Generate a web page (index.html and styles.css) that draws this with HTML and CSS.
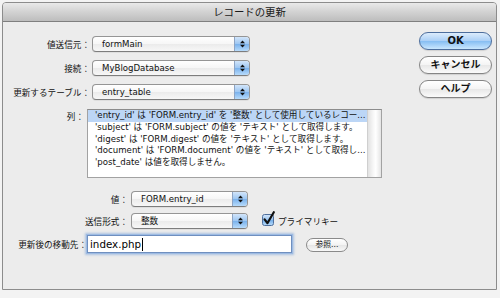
FILE: index.html
```html
<!DOCTYPE html>
<html lang="ja">
<head>
<meta charset="utf-8">
<title>レコードの更新</title>
<link rel="stylesheet" href="styles.css">
</head>
<body>
<div class="window">
  <div class="titlebar">レコードの更新</div>
  <div class="content">
    <div class="form">
      <div class="row">
        <span class="label lw-main">値送信元：</span>
        <div class="popup pw-main"><span class="popup-text">formMain</span><span class="popup-cap"><svg class="arrows" width="5" height="8" viewBox="0 0 5 8"><polygon points="0,3.2 2.5,0.5 5,3.2"/><polygon points="0,4.8 2.5,7.5 5,4.8"/></svg></span></div>
      </div>
      <div class="row gap-main">
        <span class="label lw-main">接続：</span>
        <div class="popup pw-main"><span class="popup-text">MyBlogDatabase</span><span class="popup-cap"><svg class="arrows" width="5" height="8" viewBox="0 0 5 8"><polygon points="0,3.2 2.5,0.5 5,3.2"/><polygon points="0,4.8 2.5,7.5 5,4.8"/></svg></span></div>
      </div>
      <div class="row gap-main">
        <span class="label lw-main">更新するテーブル：</span>
        <div class="popup pw-main"><span class="popup-text">entry_table</span><span class="popup-cap"><svg class="arrows" width="5" height="8" viewBox="0 0 5 8"><polygon points="0,3.2 2.5,0.5 5,3.2"/><polygon points="0,4.8 2.5,7.5 5,4.8"/></svg></span></div>
      </div>
      <div class="row row-list">
        <span class="label lw-list">列：</span>
        <div class="listbox">
          <ul class="list-items">
            <li class="selected">'entry_id' は 'FORM.entry_id' を '整数' として使用しているレコー...</li>
            <li>'subject' は 'FORM.subject' の値を 'テキスト' として取得します。</li>
            <li>'digest' は 'FORM.digest' の値を 'テキスト' として取得します。</li>
            <li>'document' は 'FORM.document' の値を 'テキスト' として取得し...</li>
            <li>'post_date' は値を取得しません。</li>
          </ul>
          <div class="scrolltrack"></div>
        </div>
      </div>
      <div class="row row-value">
        <span class="label lw-sub">値：</span>
        <div class="popup pw-sub"><span class="popup-text">FORM.entry_id</span><span class="popup-cap"><svg class="arrows" width="5" height="8" viewBox="0 0 5 8"><polygon points="0,3.2 2.5,0.5 5,3.2"/><polygon points="0,4.8 2.5,7.5 5,4.8"/></svg></span></div>
      </div>
      <div class="row gap-sub">
        <span class="label lw-sub">送信形式：</span>
        <div class="popup pw-sub"><span class="popup-text">整数</span><span class="popup-cap"><svg class="arrows" width="5" height="8" viewBox="0 0 5 8"><polygon points="0,3.2 2.5,0.5 5,3.2"/><polygon points="0,4.8 2.5,7.5 5,4.8"/></svg></span></div>
        <span class="checkbox"><svg width="16" height="16" viewBox="0 0 16 16"><defs><linearGradient id="cbg" x1="0" y1="0" x2="0" y2="1"><stop offset="0" stop-color="#d6e8fb"/><stop offset="0.5" stop-color="#98c3f0"/><stop offset="0.51" stop-color="#74aee9"/><stop offset="1" stop-color="#b9dcfb"/></linearGradient></defs><rect x="0.5" y="3.5" width="11" height="11" rx="2" fill="url(#cbg)" stroke="#4f6f9c"/><path d="M2.6 8.4 L5.4 12.2 L11.8 1.2" fill="none" stroke="#111" stroke-width="2.2" stroke-linecap="round" stroke-linejoin="round"/></svg></span>
        <span class="check-label">プライマリキー</span>
      </div>
      <div class="row gap-field">
        <span class="label lw-field">更新後の移動先：</span>
        <div class="textfield"><span class="field-text">index.php</span><span class="caret"></span></div>
        <button class="small-button">参照...</button>
      </div>
    </div>
    <div class="buttons">
      <button class="push default">OK</button>
      <button class="push">キャンセル</button>
      <button class="push">ヘルプ</button>
    </div>
  </div>
</div>
</body>
</html>
```

FILE: styles.css
```css
html, body {
  margin: 0;
  padding: 0;
}

body {
  background: #f3f3f3;
  padding: 2px 0 0 2px;
  font-family: "DejaVu Sans", "Noto Sans CJK JP", sans-serif;
  font-size: 8.6px;
  color: #111;
}

.window {
  box-sizing: border-box;
  width: 495px;
  height: 288px;
  border: 1px solid #8c8c8c;
  border-radius: 4px 4px 0 0;
  background: #ececec;
  display: flex;
  flex-direction: column;
  overflow: hidden;
}

.titlebar {
  height: 18px;
  flex: none;
  border-bottom: 1px solid #7f7f7f;
  background: linear-gradient(#e9e9e9, #d2d2d2 50%, #bdbdbd);
  text-align: center;
  font-size: 10.4px;
  line-height: 19px;
  color: #1a1a1a;
}

.content {
  flex: 1;
  display: flex;
}

.form {
  flex: 1;
  display: flex;
  flex-direction: column;
  padding-top: 14px;
}

.row {
  display: flex;
  align-items: center;
}

.gap-main { margin-top: 8px; }
.row-list { margin-top: 9px; align-items: flex-start; }
.row-value { margin-top: 13px; }
.gap-sub { margin-top: 6px; }
.gap-field { margin-top: 6px; }

.label {
  flex: none;
  text-align: right;
  white-space: nowrap;
}

.lw-main { width: 87px; margin-right: 2px; }
.lw-list { width: 81px; margin-right: 3px; padding-top: 1px; }
.lw-sub { width: 125px; margin-right: 3px; }
.lw-field { width: 84px; margin-right: 0; }

/* popup button */
.popup {
  box-sizing: border-box;
  height: 16px;
  display: flex;
  border: 1px solid #959595;
  border-bottom-color: #7d7d7d;
  border-radius: 4px;
  background: linear-gradient(#ffffff, #f6f6f6 50%, #ebebeb 51%, #f7f7f7);
  overflow: hidden;
  box-shadow: 0 1px 0 rgba(0,0,0,0.06);
}

.pw-main { width: 158px; }
.pw-sub { width: 117px; }

.popup-text {
  flex: 1;
  padding-left: 9px;
  line-height: 14px;
  white-space: nowrap;
}

.popup-cap {
  width: 14px;
  flex: none;
  display: flex;
  align-items: center;
  justify-content: center;
  border-left: 1px solid #8da4c4;
  background: linear-gradient(#d2e5fa, #9cc6f2 50%, #79b1ec 51%, #b7dbfb);
}

.arrows polygon { fill: #111; }

/* list box */
.listbox {
  box-sizing: border-box;
  width: 295px;
  height: 69px;
  display: flex;
  background: #ffffff;
  border: 1px solid #a2a2a2;
  border-top-color: #8c8c8c;
}

.list-items {
  flex: 1;
  list-style: none;
  margin: 0;
  padding: 0;
  min-width: 0;
}

.list-items li {
  height: 11.8px;
  line-height: 11.8px;
  padding-left: 7px;
  white-space: nowrap;
  overflow: hidden;
}

.list-items li.selected {
  background: #bcd6f6;
}

.scrolltrack {
  width: 13px;
  flex: none;
  border-left: 1px solid #cfcfcf;
  background: linear-gradient(90deg, #e2e2e2, #f7f7f7 40%, #ffffff 60%, #e4e4e4);
}

/* checkbox */
.checkbox {
  display: flex;
  width: 16px;
  height: 16px;
  margin-left: 14px;
  margin-top: -4px;
}

.check-label {
  margin-left: 0;
  white-space: nowrap;
}

/* text field */
.textfield {
  box-sizing: border-box;
  width: 205px;
  height: 18px;
  display: flex;
  align-items: center;
  padding-left: 2px;
  background: #ffffff;
  border: 1px solid #6f8fbf;
  box-shadow: 0 0 0 1px #9dbbe3, 0 0 2px 2px rgba(120,160,215,0.55);
  font-size: 10.3px;
  color: #000;
}

.caret {
  width: 1px;
  height: 13px;
  margin-left: 1px;
  background: #000;
}

.small-button {
  box-sizing: border-box;
  width: 42px;
  height: 14px;
  margin-left: 14px;
  margin-top: 1px;
  padding: 0;
  border: 1px solid #8a8a8a;
  border-radius: 7px;
  background: linear-gradient(#ffffff, #f3f3f3 50%, #e6e6e6 51%, #f8f8f8);
  font-family: inherit;
  font-size: 7.8px;
  line-height: 12px;
  color: #111;
}

/* push buttons */
.buttons {
  width: 73px;
  flex: none;
  margin-right: 4px;
  padding-top: 10px;
  display: flex;
  flex-direction: column;
  gap: 6px;
}

.push {
  box-sizing: border-box;
  height: 18px;
  width: 73px;
  padding: 0;
  border: 1px solid #858585;
  border-radius: 9px;
  background: linear-gradient(#ffffff, #f4f4f4 50%, #e7e7e7 51%, #fbfbfb);
  font-family: inherit;
  font-size: 10px;
  line-height: 16px;
  font-weight: bold;
  color: #111;
  box-shadow: 0 1px 1px rgba(0,0,0,0.12);
}

.push.default {
  border-color: #4d6e9d;
  background: linear-gradient(#dcecfc, #aacff6 50%, #86bdf2 51%, #cae7fe);
}
```
